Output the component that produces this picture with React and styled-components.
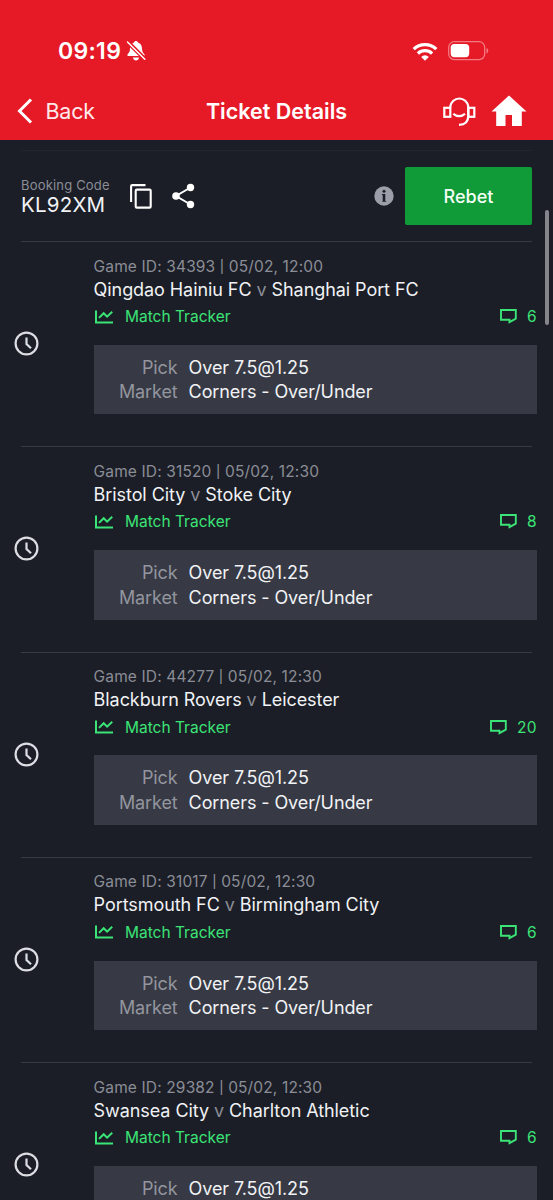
import React from "react";
import styled, { createGlobalStyle } from "styled-components";

const games = [
  { id: "34393", time: "05/02, 12:00", home: "Qingdao Hainiu FC", away: "Shanghai Port FC", comments: 6 },
  { id: "31520", time: "05/02, 12:30", home: "Bristol City", away: "Stoke City", comments: 8 },
  { id: "44277", time: "05/02, 12:30", home: "Blackburn Rovers", away: "Leicester", comments: 20 },
  { id: "31017", time: "05/02, 12:30", home: "Portsmouth FC", away: "Birmingham City", comments: 6 },
  { id: "29382", time: "05/02, 12:30", home: "Swansea City", away: "Charlton Athletic", comments: 6 },
];

const BellOffIcon = () => (
  <svg width="20" height="22" viewBox="0 0 20 22">
    <path
      d="M10 1C8.900 1 8.200 1.700 8 2.600C5.200 3.500 4.100 5.700 4 8.600C3.900 11.600 3.100 12.800 1.800 14C1 14.800 1.200 16 2.300 16H17.700C18.800 16 19 14.800 18.200 14C16.900 12.800 16.100 11.600 16 8.600C15.900 5.700 14.800 3.500 12 2.600C11.800 1.700 11.100 1 10 1Z"
      fill="#fff"
    />
    <path d="M6.900 17.600H13.100C12.700 19.500 11.500 20.500 10 20.500C8.500 20.500 7.300 19.500 6.900 17.600Z" fill="#fff" />
    <path d="M1.500 1.700L19 19.200" stroke="#e61a27" strokeWidth="4.200" />
    <path d="M1.500 2L18.800 19.300" stroke="#fff" strokeWidth="1.500" strokeLinecap="round" />
  </svg>
);

const WifiIcon = () => (
  <svg width="26" height="19" viewBox="0 0 26 19" fill="none" stroke="#fff" strokeWidth="3.200">
    <path d="M1.700 7.200A16.200 16.200 0 0 1 24.300 7.200" />
    <path d="M5.900 11.500A10.200 10.200 0 0 1 20.100 11.500" />
    <path d="M13 18.700L9.200 14.900A5.400 5.400 0 0 1 16.800 14.900Z" fill="#fff" stroke="none" />
  </svg>
);

const BatteryIcon = () => (
  <svg width="42" height="20" viewBox="0 0 42 20">
    <rect x="0.700" y="0.700" width="36" height="18" rx="5.600" fill="none" stroke="#f27a82" strokeWidth="1.300" />
    <rect x="2.700" y="2.900" width="18.500" height="13.400" rx="3.700" fill="#fff" />
    <path d="M38.500 7C40.800 7.700 40.800 11.700 38.500 12.500Z" fill="#f27a82" />
  </svg>
);

const BackIcon = () => (
  <svg width="18" height="28" viewBox="0 0 18 28" fill="none" stroke="#fff" strokeWidth="3">
    <path d="M16 2.500L4.500 14L16 25.500" />
  </svg>
);

const SupportIcon = () => (
  <svg width="34" height="32" viewBox="0 0 34 32" fill="none" stroke="#fff" strokeWidth="2.200">
    <path d="M8.300 12.500V11.500A9.100 9.400 0 0 1 26.300 11.500V20.500C26.300 26.500 22.800 29.900 17 29.900" />
    <rect x="2.300" y="12.800" width="6" height="9" />
    <rect x="26.300" y="12.800" width="6" height="9" />
    <path d="M11.300 18.700C14.500 21.900 19.800 21.900 23 18.700" />
  </svg>
);

const HomeIcon = () => (
  <svg width="36" height="32" viewBox="0 0 36 32">
    <path d="M18 0.500L35.500 16.500H30.800V31H21V20H14.500V31H5.200V16.500H0.500Z" fill="#fff" />
  </svg>
);

const CopyIcon = () => (
  <svg width="24" height="26" viewBox="0 0 24 26" fill="none" stroke="#fff" strokeWidth="2.100">
    <path d="M2.100 19V3.300Q2.100 2.100 3.300 2.100H16.500" />
    <rect x="6.700" y="6.600" width="15" height="18" rx="1.200" />
  </svg>
);

const ShareIcon = () => (
  <svg width="24" height="26" viewBox="0 0 24 26" fill="#fff">
    <path d="M19.500 4.500L5 13L19.500 21.500" fill="none" stroke="#fff" strokeWidth="2" />
    <circle cx="19.500" cy="4.500" r="3.700" />
    <circle cx="5" cy="13" r="3.800" />
    <circle cx="19.500" cy="21.500" r="3.700" />
  </svg>
);

const InfoIcon = () => (
  <svg width="20" height="20" viewBox="0 0 20 20">
    <circle cx="10" cy="10" r="9.700" fill="#9c9eaa" />
    <circle cx="10" cy="5.200" r="1.500" fill="#1b1e26" />
    <path d="M7.900 8H11.300V15H12.200V15.800H8.300V15H8.700V9H7.900Z" fill="#1b1e26" />
  </svg>
);

const ClockIcon = () => (
  <svg width="25" height="25" viewBox="0 0 25 25" fill="none" stroke="#dcdee3" strokeWidth="2.200">
    <circle cx="12.500" cy="12.500" r="10.900" />
    <path d="M12.500 6.500V13L17 17.200" />
  </svg>
);

const TrackerIcon = () => (
  <svg width="19" height="14" viewBox="0 0 19 14" fill="none" stroke="#3be477" strokeWidth="2">
    <path d="M2 0.500V12.500H19" />
    <path d="M5 7.900L9.700 3.200L13.100 6.600L18.200 1.700" />
  </svg>
);

const CommentIcon = () => (
  <svg width="17" height="15" viewBox="0 0 17 15" fill="none" stroke="#3be477" strokeWidth="1.900">
    <path d="M1 1H15.800V9.700L9.500 13.200V10.800H1Z" />
  </svg>
);

function Game({ game }) {
  return (
    <GameRow>
      <Status>
        <ClockIcon />
      </Status>
      <GameInfo>
        <GameId>
          Game ID: {game.id} <Bar>|</Bar> {game.time}
        </GameId>
        <Teams>
          {game.home} <span>v</span> {game.away}
        </Teams>
        <Links>
          <Tracker>
            <TrackerIcon />
            Match Tracker
          </Tracker>
          <Comments>
            <CommentIcon />
            {game.comments}
          </Comments>
        </Links>
        <PickBox>
          <PickText $muted>Pick</PickText>
          <PickText>Over 7.5@1.25</PickText>
          <PickText $muted>Market</PickText>
          <PickText>Corners - Over/Under</PickText>
        </PickBox>
      </GameInfo>
    </GameRow>
  );
}

function App() {
  return (
    <Page>
      <GlobalStyle />
      <Header>
        <StatusBar>
          <Time>09:19</Time>
          <BellOffIcon />
          <Signals>
            <WifiIcon />
            <BatteryIcon />
          </Signals>
        </StatusBar>
        <NavBar>
          <BackButton>
            <BackIcon />
            Back
          </BackButton>
          <Title>Ticket Details</Title>
          <NavIcons>
            <SupportIcon />
            <HomeIcon />
          </NavIcons>
        </NavBar>
      </Header>

      <Booking>
        <BookingCode>
          <small>Booking Code</small>
          <strong>KL92XM</strong>
        </BookingCode>
        <BookingIcons>
          <CopyIcon />
          <ShareIcon />
        </BookingIcons>
        <InfoIcon />
        <RebetButton>Rebet</RebetButton>
      </Booking>

      {games.map((game) => (
        <Game key={game.id} game={game} />
      ))}
      <ScrollThumb />
    </Page>
  );
}

const GlobalStyle = createGlobalStyle`
  * {
    box-sizing: border-box;
  }
  body {
    margin: 0;
    background: #1b1e26;
  }
  svg {
    display: block;
    flex-shrink: 0;
  }
`;

const Page = styled.div`
  position: relative;
  width: 553px;
  height: 1200px;
  overflow: hidden;
  background: #1b1e26;
  color: #f1f2f5;
  font-family: Inter, sans-serif;
`;

const Header = styled.header`
  height: 140px;
  background: #e61a27;
  color: #fff;
`;

const StatusBar = styled.div`
  display: flex;
  align-items: center;
  height: 82px;
  padding: 20px 63px 0 58px;
`;

const Time = styled.span`
  width: 68px;
  font-size: 23px;
  font-weight: 600;
  line-height: 28px;
  letter-spacing: 0.3px;
  white-space: nowrap;
`;

const Signals = styled.div`
  display: flex;
  align-items: center;
  gap: 10px;
  margin-left: auto;
`;

const NavBar = styled.nav`
  display: grid;
  grid-template-columns: 1fr auto 1fr;
  align-items: center;
  height: 58px;
  padding: 0 15px;
`;

const BackButton = styled.button`
  display: flex;
  align-items: center;
  gap: 12.500px;
  padding: 0;
  border: none;
  background: none;
  color: #ffe9ea;
  font-family: inherit;
  font-size: 21.5px;
  letter-spacing: -0.2px;
`;

const Title = styled.h1`
  margin: 0;
  font-size: 21.5px;
  font-weight: 600;
  white-space: nowrap;
`;

const NavIcons = styled.div`
  display: flex;
  justify-content: flex-end;
  align-items: center;
  gap: 15px;
  margin-right: 11px;
`;

const Booking = styled.section`
  display: flex;
  align-items: center;
  height: 92px;
  margin: 10px 21px 0;
  border-top: 1px solid #22252e;
  border-bottom: 1px solid #373a43;
`;

const BookingCode = styled.div`
  display: flex;
  flex-direction: column;
  width: 108px;
  padding-bottom: 1px;
  small {
    color: #8b8d97;
    font-size: 13px;
    line-height: 18px;
    letter-spacing: 0.18px;
    white-space: nowrap;
  }
  strong {
    font-size: 20.5px;
    font-weight: 400;
    line-height: 22px;
    letter-spacing: 0.2px;
  }
`;

const BookingIcons = styled.div`
  display: flex;
  gap: 18px;
  flex: 1;
`;

const RebetButton = styled.button`
  width: 127px;
  height: 58px;
  margin-left: 11px;
  border: none;
  border-radius: 2px;
  background: #109a38;
  color: #f4fff6;
  font-family: inherit;
  font-size: 18px;
  font-weight: 500;
`;

const GameRow = styled.article`
  display: flex;
  height: 205.25px;
  margin: 0 21px;
  border-bottom: 1px solid #373a43;
`;

const Status = styled.div`
  width: 72.600px;
  padding-top: 89px;
  svg {
    margin-left: -7px;
  }
`;

const GameInfo = styled.div`
  flex: 1;
  margin-right: -5px;
  padding-top: 13.700px;
`;

const GameId = styled.div`
  color: #8b8d97;
  font-size: 15.5px;
  line-height: 22px;
  letter-spacing: 0.14px;
`;

const Bar = styled.span`
  font-size: 12.5px;
  font-weight: 500;
  vertical-align: 1px;
`;

const Teams = styled.div`
  font-size: 18px;
  line-height: 23.500px;
  letter-spacing: -0.07px;
  span {
    color: #8b8d97;
  }
`;

const Links = styled.div`
  display: flex;
  justify-content: space-between;
  align-items: center;
  height: 31px;
  color: #3be477;
  font-size: 15.5px;
`;

const Tracker = styled.div`
  display: flex;
  align-items: center;
  gap: 12.400px;
`;

const Comments = styled.div`
  display: flex;
  align-items: center;
  gap: 10px;
  letter-spacing: 0.4px;
`;

const PickBox = styled.div`
  display: grid;
  grid-template-columns: 84px 1fr;
  column-gap: 11px;
  grid-auto-rows: 24.500px;
  height: 69.500px;
  margin-top: 12.800px;
  padding-top: 11px;
  background: #373a44;
`;

const PickText = styled.span`
  color: ${(props) => (props.$muted ? "#93959f" : "#f1f2f5")};
  font-size: 18px;
  line-height: 24px;
  letter-spacing: -0.1px;
  text-align: ${(props) => (props.$muted ? "right" : "left")};
`;

const ScrollThumb = styled.div`
  position: absolute;
  top: 210px;
  right: 4px;
  width: 4px;
  height: 115px;
  border-radius: 2px;
  background: #85868b;
`;

export default App;
